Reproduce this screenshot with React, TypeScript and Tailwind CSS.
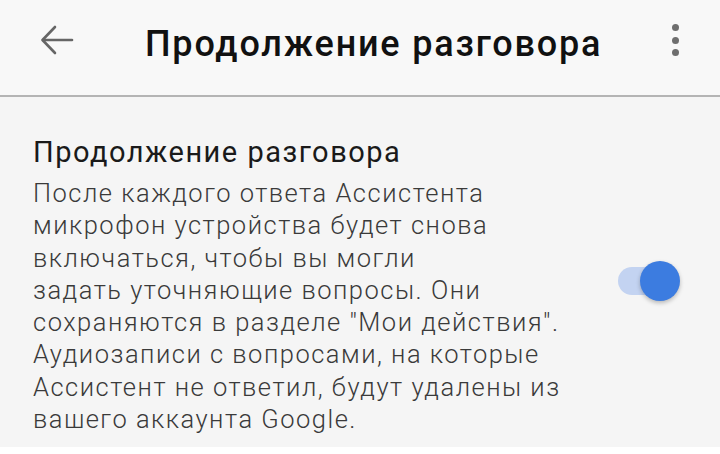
import { useState } from "react";

export default function App() {
  const [on, setOn] = useState(true);

  return (
    <div
      className="flex h-[454px] w-[720px] flex-col overflow-hidden bg-white"
      style={{ fontFamily: "Roboto, 'Noto Sans', sans-serif" }}
    >
      {/* Toolbar */}
      <header className="flex h-[97px] shrink-0 items-start border-b-2 border-[#b4b4b4] bg-[#f8f8f8] shadow-[0_2px_4px_rgba(0,0,0,0.12)]">
        <button className="ml-[39px] mt-[24px] flex h-[32px] w-[36px] items-center justify-center text-[#666]">
          <svg width="34" height="30" viewBox="0 0 34 30" fill="none" stroke="currentColor" strokeWidth="2.6" strokeLinecap="round" strokeLinejoin="round">
            <path d="M32 15H3" />
            <path d="M15 2L2.5 15L15 28" />
          </svg>
        </button>
        <h1 className="ml-[70px] mt-[17px] text-[36px] font-medium leading-[54px] tracking-[1.8px] text-[#111]">
          Продолжение разговора
        </h1>
        <button className="ml-auto mr-[41px] mt-[24px] flex flex-col items-center gap-[5.5px]">
          <span className="h-[7px] w-[7px] rounded-full bg-[#6e6e6e]" />
          <span className="h-[7px] w-[7px] rounded-full bg-[#6e6e6e]" />
          <span className="h-[7px] w-[7px] rounded-full bg-[#6e6e6e]" />
        </button>
      </header>

      {/* Setting row */}
      <div className="mb-[7px] flex flex-1 items-start bg-[#f5f5f5] pl-[33px] pr-[56px] pt-[30px]">
        <div className="w-[570px]">
          <h2 className="text-[29px] leading-[50px] tracking-[1.5px] text-[#1a1a1a]">Продолжение разговора</h2>
          <p className="text-[25.5px] font-light leading-[32.3px] tracking-[1.5px] text-[#3a3a3a]">
            После каждого ответа Ассистента
            <br />
            микрофон устройства будет снова
            <br />
            включаться, чтобы вы могли
            <br />
            задать уточняющие вопросы. Они
            <br />
            сохраняются в разделе "Мои действия".
            <br />
            Аудиозаписи с вопросами, на которые
            <br />
            Ассистент не ответил, будут удалены из
            <br />
            вашего аккаунта Google.
          </p>
        </div>

        <button
          onClick={() => setOn(!on)}
          className="relative ml-auto mt-[140px] h-[28px] w-[46px] shrink-0 rounded-full bg-[#c3d3f1]"
        >
          <span
            className={`absolute top-1/2 h-[40px] w-[40px] -translate-y-1/2 rounded-full shadow-[0_2px_4px_rgba(0,0,0,0.25)] ${
              on ? "left-[22px] bg-[#3c7ce0]" : "left-[-16px] bg-[#f1f1f1]"
            }`}
          />
        </button>
      </div>
    </div>
  );
}
